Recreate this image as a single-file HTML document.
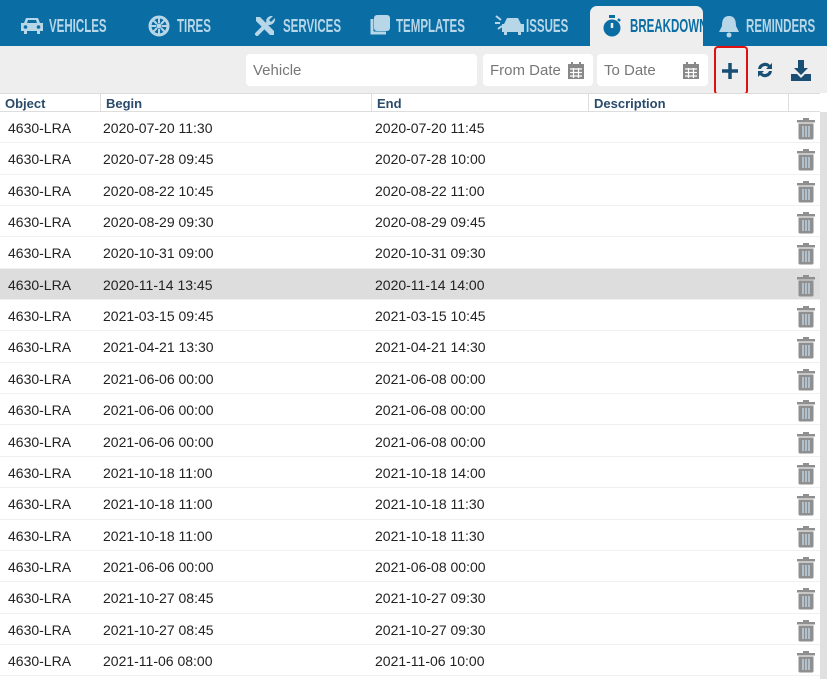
<!DOCTYPE html>
<html><head><style>
*{box-sizing:border-box;margin:0;padding:0}
body{width:827px;height:679px;overflow:hidden;background:#fff;font-family:"Liberation Sans",sans-serif;position:relative}
.nav{position:absolute;left:0;top:0;width:827px;height:46px;background:#0a6ea4;overflow:hidden}
.ic{position:absolute}
.lb{position:absolute;top:16px;color:#b7d6e8;font-size:18px;font-weight:bold;line-height:20px;white-space:nowrap;transform:scaleX(0.64);transform-origin:left}
.active{position:absolute;left:590px;top:6px;width:113px;height:40px;background:#eee;border-radius:7px 7px 0 0;overflow:hidden}
.tb{position:absolute;left:0;top:46px;width:827px;height:47px;background:#eee}
.inp{position:absolute;top:54px;height:32px;background:#fff;border-radius:4px;font-size:15px;color:#777;padding:8px 7px}
.inp svg{position:absolute;right:9px;top:8px}
.hd{position:absolute;top:93px;left:0;width:820px;height:19px;background:#fff;border-top:1px solid #ddd;border-bottom:1px solid #ddd;font-size:13px;font-weight:bold;color:#2a4b6b}
.hd div{position:absolute;top:0;height:18px;padding:2px 5px;border-right:1px solid #ddd}
.row{position:absolute;left:0;width:820px;height:31.35px;border-bottom:1px solid #f0f0f0;font-size:14px;color:#222}
.row span{position:absolute;top:8px}
.row svg{position:absolute;left:797px;top:6px}
.sb{position:absolute;left:820px;top:112px;width:7px;height:567px;background:#e0e0e0}
</style></head><body>
<div class="nav">
<svg class="ic" style="left:20px;top:16px" width="24" height="18" viewBox="0 0 24 18"><path d="M4 7 L6 2 H18 L20 7 H23 V15 H20 V18 H17 V15 H7 V18 H4 V15 H1 V7Z" fill="#b7d6e8"/><circle cx="5.5" cy="11" r="1.8" fill="#0a6ea4"/><circle cx="18.5" cy="11" r="1.8" fill="#0a6ea4"/><path d="M7 7 L8 4 H16 L17 7Z" fill="#0a6ea4"/></svg>
<div class="lb" style="left:49px">VEHICLES</div>
<svg class="ic" style="left:148px;top:15px" width="22" height="22" viewBox="0 0 22 22"><circle cx="11" cy="11" r="9" fill="none" stroke="#b7d6e8" stroke-width="3"/><circle cx="11" cy="11" r="2.5" fill="#b7d6e8"/><path d="M11 3V8M11 14V19M3 11H8M14 11H19M5 5L9 9M13 13L17 17M17 5L13 9M9 13L5 17" stroke="#b7d6e8" stroke-width="2"/></svg>
<div class="lb" style="left:177px">TIRES</div>
<svg class="ic" style="left:253px;top:14px" width="24" height="24" viewBox="0 0 24 24"><path d="M4 20 L14 10" stroke="#b7d6e8" stroke-width="4" stroke-linecap="round"/><path d="M13 7 A6 6 0 0 1 20 2 L16 6 L18 8 L22 4 A6 6 0 0 1 16 11Z" fill="#b7d6e8"/><path d="M3 3 L7 3 L21 17 L21 21 L17 21 L3 7Z" fill="#b7d6e8"/></svg>
<div class="lb" style="left:283px">SERVICES</div>
<svg class="ic" style="left:367px;top:14px" width="24" height="22" viewBox="0 0 24 22"><rect x="7" y="1" width="16" height="16" rx="3" fill="#b7d6e8"/><path d="M5 5 V19 H19" stroke="#b7d6e8" stroke-width="3" fill="none"/></svg>
<div class="lb" style="left:396px">TEMPLATES</div>
<svg class="ic" style="left:494px;top:14px" width="32" height="22" viewBox="0 0 32 22"><path d="M2 2l5 4M1 9h5M4 15l4-3" stroke="#b7d6e8" stroke-width="2"/><path d="M10 10 L13 4 H24 L27 10 H30 V18 H27 V21 H24 V18 H13 V21 H10 V18 H8 V10Z" fill="#b7d6e8"/></svg>
<div class="lb" style="left:526px">ISSUES</div>
<div class="active">
<svg class="ic" style="left:12px;top:8px" width="20" height="24" viewBox="0 0 20 24"><circle cx="10" cy="14" r="8.5" fill="#0a6ea4"/><rect x="7" y="1" width="6" height="3" fill="#0a6ea4"/><path d="M10 9V14" stroke="#eee" stroke-width="2.5"/><path d="M16 5l2 2" stroke="#0a6ea4" stroke-width="2.5"/></svg>
<div class="lb" style="left:40px;top:10px;color:#0a6ea4">BREAKDOWN</div>
</div>
<svg class="ic" style="left:718px;top:14px" width="22" height="24" viewBox="0 0 22 24"><path d="M11 2 C5 2 4 7 4 12 L1 18 H21 L18 12 C18 7 17 2 11 2Z" fill="#b7d6e8"/><circle cx="11" cy="21" r="2.5" fill="#b7d6e8"/></svg>
<div class="lb" style="left:746px">REMINDERS</div>
</div>
<div class="tb"></div>
<div class="inp" style="left:246px;width:231px">Vehicle</div>
<div class="inp" style="left:483px;width:110px">From Date<svg width="16" height="17" viewBox="0 0 16 17"><rect x="0" y="2" width="16" height="15" fill="#888"/><rect x="3" y="0" width="2" height="4" fill="#888"/><rect x="11" y="0" width="2" height="4" fill="#888"/><path d="M2 7h12M2 10.5h12M2 14h12M5.5 6v10M10.5 6v10" stroke="#fff" stroke-width="1.2"/></svg></div>
<div class="inp" style="left:597px;width:111px">To Date<svg width="16" height="17" viewBox="0 0 16 17"><rect x="0" y="2" width="16" height="15" fill="#888"/><rect x="3" y="0" width="2" height="4" fill="#888"/><rect x="11" y="0" width="2" height="4" fill="#888"/><path d="M2 7h12M2 10.5h12M2 14h12M5.5 6v10M10.5 6v10" stroke="#fff" stroke-width="1.2"/></svg></div>
<div style="position:absolute;left:714px;top:46px;width:34px;height:49px;border:2px solid #e01010;border-radius:4px"></div>
<svg style="position:absolute;left:721px;top:62px" width="18" height="18" viewBox="0 0 18 18"><path d="M9 1V17M1 9H17" stroke="#1a4f75" stroke-width="3.5"/></svg>
<svg style="position:absolute;left:756px;top:61px" width="18" height="18" viewBox="0 0 18 18"><path d="M2 8 A7 7 0 0 1 14 4 L16 2 V8 H10 L12 6 A4.5 4.5 0 0 0 5 8Z M16 10 A7 7 0 0 1 4 14 L2 16 V10 H8 L6 12 A4.5 4.5 0 0 0 13 10Z" fill="#1a4f75"/></svg>
<svg style="position:absolute;left:791px;top:60px" width="20" height="21" viewBox="0 0 20 21"><path d="M7 0H13V8H17L10 15L3 8H7Z" fill="#1a4f75"/><path d="M0 14H6L10 18L14 14H20V21H0Z" fill="#1a4f75"/></svg>
<div class="hd"><div style="left:0;width:101px">Object</div><div style="left:101px;width:271px">Begin</div><div style="left:372px;width:217px">End</div><div style="left:589px;width:200px">Description</div></div>
<div class="sb"></div>
<div id="rows"></div>
<script>
var d=[["2020-07-20 11:30","2020-07-20 11:45"],["2020-07-28 09:45","2020-07-28 10:00"],["2020-08-22 10:45","2020-08-22 11:00"],["2020-08-29 09:30","2020-08-29 09:45"],["2020-10-31 09:00","2020-10-31 09:30"],["2020-11-14 13:45","2020-11-14 14:00"],["2021-03-15 09:45","2021-03-15 10:45"],["2021-04-21 13:30","2021-04-21 14:30"],["2021-06-06 00:00","2021-06-08 00:00"],["2021-06-06 00:00","2021-06-08 00:00"],["2021-06-06 00:00","2021-06-08 00:00"],["2021-10-18 11:00","2021-10-18 14:00"],["2021-10-18 11:00","2021-10-18 11:30"],["2021-10-18 11:00","2021-10-18 11:30"],["2021-06-06 00:00","2021-06-08 00:00"],["2021-10-27 08:45","2021-10-27 09:30"],["2021-10-27 08:45","2021-10-27 09:30"],["2021-11-06 08:00","2021-11-06 10:00"]];
var h="";var tr='<svg width="18" height="22" viewBox="0 0 18 22"><rect x="0" y="2" width="18" height="2.5" fill="#8f8f8f"/><rect x="6" y="0" width="6" height="3" fill="#8f8f8f"/><path d="M1.5 5.5H16.5V20a1.5 1.5 0 0 1-1.5 1.5H3A1.5 1.5 0 0 1 1.5 20Z" fill="#8f8f8f"/><path d="M6 8V19M9 8V19M12 8V19" stroke="#c5dcec" stroke-width="1.3"/></svg>';
d.forEach(function(r,i){var t=112+i*31.35;h+='<div class="row" style="top:'+t+'px;'+(i==5?'background:#ddd':'')+'"><span style="left:8px">4630-LRA</span><span style="left:103px">'+r[0]+'</span><span style="left:375px">'+r[1]+'</span>'+tr+'</div>';});
document.getElementById("rows").innerHTML=h;
</script>
</body></html>
